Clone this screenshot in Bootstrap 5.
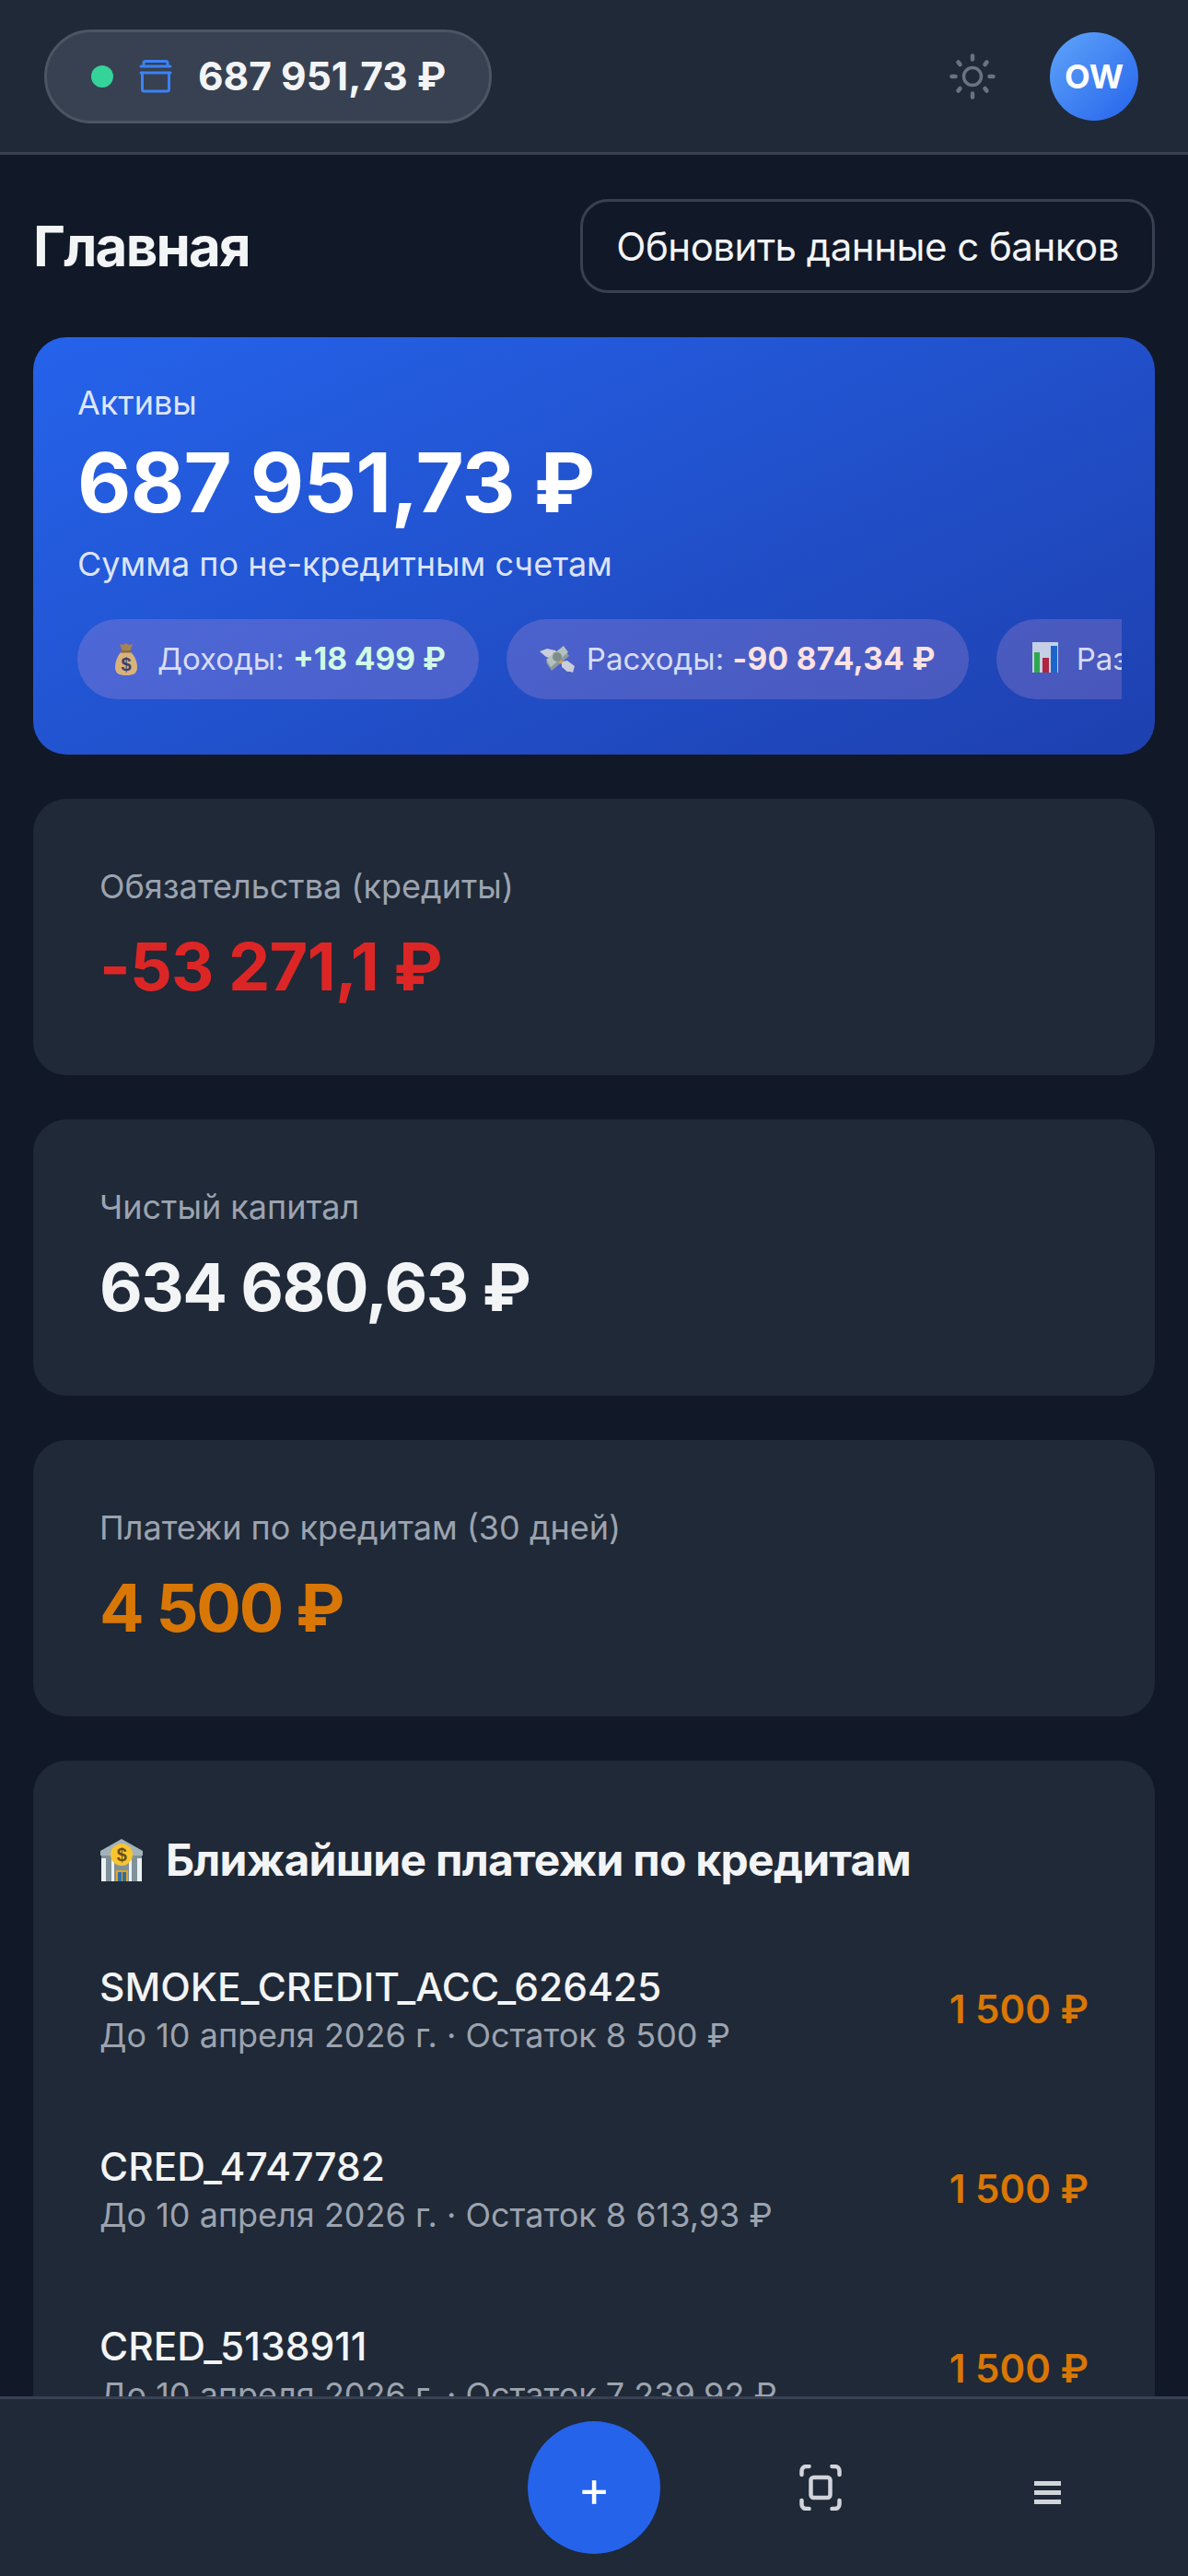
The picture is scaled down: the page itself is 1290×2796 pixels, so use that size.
<!DOCTYPE html>
<html lang="ru">
<head>
    <meta charset="UTF-8">
    <meta name="viewport" content="width=device-width, initial-scale=1.0">
    <title>Главная</title>
    <link rel="stylesheet" href="https://cdn.jsdelivr.net/npm/bootstrap@5.3.3/dist/css/bootstrap.min.css">
    <style>
        html, body {
            height: 100%;
        }

        body {
            font-family: Inter, "Noto Sans", sans-serif;
            background-color: #111827;
            color: #f3f4f6;
            overflow: hidden;
        }

        .app-shell {
            height: 2796px;
        }

        .top-bar {
            height: 168px;
            padding: 0 54px 0 48px;
            background-color: #1f2937;
            border-bottom: 3px solid #374151;
        }

        .balance-pill {
            height: 102px;
            padding: 0 47px 0 48px;
            gap: 28px;
            background-color: #374151;
            border: 3px solid #4b5563;
            border-radius: 51px;
            font-size: 42.5px;
            font-weight: 700;
        }

        .status-dot {
            width: 24px;
            height: 24px;
            border-radius: 50%;
            background-color: #34d399;
        }

        .top-actions {
            gap: 59px;
        }

        .avatar {
            width: 96px;
            height: 96px;
            border-radius: 50%;
            background: linear-gradient(135deg, #60a5fa, #2563eb);
            color: #fff;
            font-size: 36px;
            font-weight: 700;
        }

        .page-body {
            padding: 48px 36px 0;
        }

        .page-title {
            font-size: 60px;
            font-weight: 700;
            letter-spacing: -0.03em;
            margin: 0;
        }

        .refresh-btn {
            height: 102px;
            padding: 0 36px;
            color: #f3f4f6;
            background: transparent;
            border: 3px solid #374151;
            border-radius: 30px;
            font-size: 42px;
            letter-spacing: -0.012em;
        }

        .hero-card {
            height: 453px;
            margin-top: 48px;
            padding: 48px 36px 0 48px;
            border-radius: 36px;
            background: linear-gradient(155deg, #2563eb, #1e40af);
            color: #fff;
        }

        .hero-label {
            font-size: 36px;
            line-height: 1.3;
            color: rgba(255, 255, 255, .85);
            margin-bottom: 8px;
        }

        .hero-value {
            font-size: 90px;
            font-weight: 700;
            letter-spacing: -0.008em;
            line-height: 110px;
        }

        .hero-note {
            font-size: 36px;
            line-height: 1.3;
            color: rgba(255, 255, 255, .85);
            margin-top: 10px;
        }

        .chip-row {
            gap: 30px;
            margin-top: 36px;
            overflow: hidden;
        }

        .stat-chip {
            height: 87px;
            padding: 0 36px;
            gap: 12px;
            flex-shrink: 0;
            white-space: nowrap;
            border-radius: 44px;
            background-color: rgba(245, 170, 215, .2);
            color: rgba(255, 255, 255, .8);
            font-size: 33px;
        }

        .stat-chip b {
            font-weight: 700;
            font-size: 33.5px;
        }

        .tone-in { color: #d1fae5; }
        .tone-out {
            color: #fee2e2;
            letter-spacing: .01em;
        }
        .tone-plain { color: #fff; }

        .stat-card {
            height: 300px;
            margin-top: 48px;
            padding: 72px;
            border-radius: 36px;
            background-color: #1f2937;
        }

        .stat-label {
            font-size: 36px;
            line-height: 1.3;
            color: #9ca3af;
            margin-bottom: 20px;
        }

        .stat-value {
            font-size: 72px;
            font-weight: 700;
            letter-spacing: -0.02em;
            line-height: 1.2;
        }

        .tone-red {
            color: #dc2626;
            letter-spacing: -0.011em;
        }

        .tone-orange {
            color: #d97706;
            letter-spacing: -0.03em;
        }

        .list-card {
            margin-top: 48px;
            padding: 72px;
            border-radius: 36px 36px 0 0;
            background-color: #1f2937;
        }

        .list-title {
            gap: 24px;
            font-size: 48px;
            font-weight: 700;
            letter-spacing: -0.015em;
            margin-bottom: 58px;
        }

        .pay-row {
            height: 195px;
            padding-bottom: 60px;
        }

        .pay-info {
            padding-top: 3px;
        }

        .pay-name {
            font-size: 42.5px;
            font-weight: 500;
            line-height: 1.3;
        }

        .pay-sub {
            font-size: 36px;
            line-height: 1.4;
            color: #9ca3af;
        }

        .pay-sum {
            font-size: 42px;
            font-weight: 600;
            color: #d97706;
        }

        .bottom-bar {
            left: 0;
            right: 0;
            bottom: 0;
            height: 195px;
            background-color: #1f2937;
            border-top: 3px solid #374151;
        }

        .fab {
            left: 573px;
            top: 24px;
            width: 144px;
            height: 144px;
            border-radius: 50%;
            background-color: #2563eb;
            color: #fff;
            font-size: 54px;
        }

        .scan-icon {
            left: 868px;
            top: 71px;
        }

        .menu-icon {
            left: 1123px;
            top: 89px;
        }
    </style>
</head>

<body>
    <div class="app-shell d-flex flex-column position-relative">
        <header class="top-bar d-flex align-items-center justify-content-between flex-shrink-0">
            <div class="balance-pill d-flex align-items-center">
                <span class="status-dot"></span>
                <svg width="36" height="36" viewBox="0 0 36 36" fill="none" stroke="#3b82f6" stroke-width="3" stroke-linecap="round" stroke-linejoin="round">
                    <path d="M5 6V3.500a2 2 0 0 1 2-2h22a2 2 0 0 1 2 2V6"/>
                    <path d="M2 7h32M2 14h32"/>
                    <path d="M3.500 14v18a2 2 0 0 0 2 2h25a2 2 0 0 0 2-2V14"/>
                </svg>
                <span>687 951,73 ₽</span>
            </div>
            <div class="top-actions d-flex align-items-center">
                <svg width="50" height="50" viewBox="0 0 50 50" fill="none" stroke="#6b7280" stroke-linecap="round">
                    <circle cx="25" cy="25" r="9.500" stroke-width="3.500"/>
                    <path stroke-width="4.500" d="M25 2.500v4M25 43.500v4M2.500 25h4M43.500 25h4M9.500 9.500l2 2.500M38.500 38l2 2.500M9.500 40.500l2-2.500M38.500 12l2-2.500"/>
                </svg>
                <div class="avatar d-flex align-items-center justify-content-center">OW</div>
            </div>
        </header>

        <main class="page-body flex-grow-1 overflow-hidden">
            <div class="d-flex align-items-center justify-content-between">
                <h1 class="page-title">Главная</h1>
                <button type="button" class="btn refresh-btn">Обновить данные с банков</button>
            </div>

            <section class="hero-card">
                <div class="hero-label">Активы</div>
                <div class="hero-value">687 951,73 ₽</div>
                <div class="hero-note">Сумма по не-кредитным счетам</div>
                <div class="chip-row d-flex">
                    <div class="stat-chip d-flex align-items-center">
                        <svg width="39" height="39" viewBox="0 0 39 39">
                            <path fill="#a8824e" d="M10 3l4 1 3-2 3 2 4-1-3 8h-8z"/>
                            <path fill="#d9b27c" d="M12 11h9c5 4 8 11 8 17 0 7-4 9-12 9S5 35 5 28c0-6 3-13 7-17z"/>
                            <rect x="11" y="10" width="11" height="2.500" fill="#8a6a3e"/>
                            <text x="17" y="32" text-anchor="middle" font-family="Liberation Sans, sans-serif" font-size="20" font-weight="700" fill="#3b3f6b">$</text>
                        </svg>
                        <span>Доходы: <b class="tone-in">+18 499 ₽</b></span>
                    </div>
                    <div class="stat-chip d-flex align-items-center">
                        <svg width="39" height="39" viewBox="0 0 39 39">
                            <path fill="#c9cedb" d="M0 11l8-3 9 2 3 5-6 4-7-2z"/>
                            <path fill="#c9cedb" d="M24 22l6-1 8 6-2 7-3-1-3 0-6-5z"/>
                            <path fill="#8c9a9c" d="M7 23L26 8l6 8-19 16z"/>
                            <path fill="#b4c0bd" d="M7 20L26 5l5 7-19 16z"/>
                            <path fill="#d6a24a" d="M14 13l2-1 9 11-2 2z"/>
                            <circle cx="19" cy="17" r="5" fill="#7e8d8a"/>
                        </svg>
                        <span>Расходы: <b class="tone-out">-90 874,34 ₽</b></span>
                    </div>
                    <div class="stat-chip d-flex align-items-center">
                        <svg width="39" height="39" viewBox="0 0 39 39">
                            <rect x="3" y="1" width="28" height="33" fill="#c5cfe6"/>
                            <rect x="5" y="12" width="6" height="22" fill="#2ea84f"/>
                            <rect x="14" y="18" width="7" height="16" fill="#b0263f"/>
                            <rect x="23" y="5" width="7" height="29" fill="#1d66c9"/>
                        </svg>
                        <span>Разница: <b class="tone-plain">-72 375,34 ₽</b></span>
                    </div>
                </div>
            </section>

            <section class="stat-card">
                <div class="stat-label">Обязательства (кредиты)</div>
                <div class="stat-value tone-red">-53 271,1 ₽</div>
            </section>
            <section class="stat-card">
                <div class="stat-label">Чистый капитал</div>
                <div class="stat-value">634 680,63 ₽</div>
            </section>
            <section class="stat-card">
                <div class="stat-label">Платежи по кредитам (30 дней)</div>
                <div class="stat-value tone-orange">4 500 ₽</div>
            </section>

            <section class="list-card">
                <div class="list-title d-flex align-items-center">
                    <svg width="48" height="48" viewBox="0 0 48 48">
                        <rect x="2" y="19" width="44" height="28" fill="#7f929c"/>
                        <path fill="#a3b3ba" d="M24 1l23 13v5H1v-5z"/>
                        <rect x="2" y="22" width="5" height="25" fill="#eef1f3"/>
                        <rect x="13" y="22" width="3" height="25" fill="#eef1f3"/>
                        <rect x="32" y="22" width="3" height="25" fill="#eef1f3"/>
                        <rect x="41" y="22" width="5" height="25" fill="#eef1f3"/>
                        <rect x="18" y="35" width="13" height="12" fill="#e0a526"/>
                        <rect x="20" y="37" width="4" height="10" fill="#2f6ea5"/>
                        <rect x="25" y="37" width="4" height="10" fill="#2f6ea5"/>
                        <circle cx="24" cy="18" r="12" fill="#f8c531"/>
                        <text x="24" y="25" text-anchor="middle" font-family="Liberation Sans, sans-serif" font-size="20" font-weight="700" fill="#6d4c12">$</text>
                    </svg>
                    <span>Ближайшие платежи по кредитам</span>
                </div>
                <div class="pay-row d-flex align-items-center justify-content-between">
                    <div class="pay-info">
                        <div class="pay-name">SMOKE_CREDIT_ACC_626425</div>
                        <div class="pay-sub">До 10 апреля 2026 г. · Остаток 8 500 ₽</div>
                    </div>
                    <div class="pay-sum">1 500 ₽</div>
                </div>
                <div class="pay-row d-flex align-items-center justify-content-between">
                    <div class="pay-info">
                        <div class="pay-name">CRED_4747782</div>
                        <div class="pay-sub">До 10 апреля 2026 г. · Остаток 8 613,93 ₽</div>
                    </div>
                    <div class="pay-sum">1 500 ₽</div>
                </div>
                <div class="pay-row d-flex align-items-center justify-content-between">
                    <div class="pay-info">
                        <div class="pay-name">CRED_5138911</div>
                        <div class="pay-sub">До 10 апреля 2026 г. · Остаток 7 239,92 ₽</div>
                    </div>
                    <div class="pay-sum">1 500 ₽</div>
                </div>
            </section>
        </main>

        <nav class="bottom-bar position-absolute">
            <button type="button" class="btn fab position-absolute d-flex align-items-center justify-content-center p-0">+</button>
            <svg class="scan-icon position-absolute" width="46" height="50" viewBox="0 0 46 50" fill="none" stroke="#d1d5db" stroke-width="4.500" stroke-linecap="round">
                <path d="M2.500 11V7a5 5 0 0 1 5-5h3M35.500 2h3a5 5 0 0 1 5 5v4M2.500 39v4a5 5 0 0 0 5 5h3M35.500 48h3a5 5 0 0 0 5-5v-4"/>
                <rect x="12.500" y="14" width="21" height="22" rx="3"/>
            </svg>
            <svg class="menu-icon position-absolute" width="29" height="25" viewBox="0 0 29 25" fill="#d1d5db">
                <rect width="29" height="5"/>
                <rect y="10" width="29" height="5"/>
                <rect y="20" width="29" height="5"/>
            </svg>
        </nav>
    </div>
    <script src="https://cdn.jsdelivr.net/npm/bootstrap@5.3.3/dist/js/bootstrap.bundle.min.js"></script>
</body>
</html>
